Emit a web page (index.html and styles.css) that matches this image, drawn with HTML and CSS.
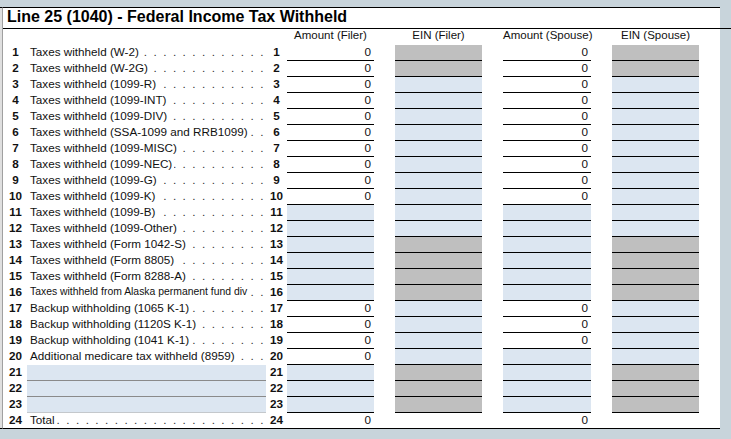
FILE: index.html
```html
<!DOCTYPE html>
<html>
<head>
<meta charset="utf-8">
<title>Line 25 (1040) - Federal Income Tax Withheld</title>
<link rel="stylesheet" href="styles.css">
</head>
<body>
<div class="window">
  <div class="edge"></div>
  <div class="panel">
    <div class="title">Line 25 (1040) - Federal Income Tax Withheld</div>
    <div class="row hdr">
      <span class="num"></span><span class="lbl"></span><span class="num2"></span>
      <span class="cell c1">Amount (Filer)</span>
      <span class="cell c2">EIN (Filer)</span>
      <span class="cell c3">Amount (Spouse)</span>
      <span class="cell c4">EIN (Spouse)</span>
    </div>

    <div class="row"><span class="num">1</span><span class="lbl"><span class="t">Taxes withheld (W-2)</span><span class="dots"></span></span><span class="num2">1</span><span class="cell c1">0</span><span class="cell c2 g"></span><span class="cell c3">0</span><span class="cell c4 g"></span></div>
    <div class="row"><span class="num">2</span><span class="lbl"><span class="t">Taxes withheld (W-2G)</span><span class="dots"></span></span><span class="num2">2</span><span class="cell c1">0</span><span class="cell c2 g"></span><span class="cell c3">0</span><span class="cell c4 g"></span></div>
    <div class="row"><span class="num">3</span><span class="lbl"><span class="t">Taxes withheld (1099-R)</span><span class="dots"></span></span><span class="num2">3</span><span class="cell c1">0</span><span class="cell c2 b"></span><span class="cell c3">0</span><span class="cell c4 b"></span></div>
    <div class="row"><span class="num">4</span><span class="lbl"><span class="t">Taxes withheld (1099-INT)</span><span class="dots"></span></span><span class="num2">4</span><span class="cell c1">0</span><span class="cell c2 b"></span><span class="cell c3">0</span><span class="cell c4 b"></span></div>
    <div class="row"><span class="num">5</span><span class="lbl"><span class="t">Taxes withheld (1099-DIV)</span><span class="dots"></span></span><span class="num2">5</span><span class="cell c1">0</span><span class="cell c2 b"></span><span class="cell c3">0</span><span class="cell c4 b"></span></div>
    <div class="row"><span class="num">6</span><span class="lbl"><span class="t">Taxes withheld (SSA-1099 and RRB1099)</span><span class="dots"></span></span><span class="num2">6</span><span class="cell c1">0</span><span class="cell c2 b"></span><span class="cell c3">0</span><span class="cell c4 b"></span></div>
    <div class="row"><span class="num">7</span><span class="lbl"><span class="t">Taxes withheld (1099-MISC)</span><span class="dots"></span></span><span class="num2">7</span><span class="cell c1">0</span><span class="cell c2 b"></span><span class="cell c3">0</span><span class="cell c4 b"></span></div>
    <div class="row"><span class="num">8</span><span class="lbl"><span class="t">Taxes withheld (1099-NEC)</span><span class="dots"></span></span><span class="num2">8</span><span class="cell c1">0</span><span class="cell c2 b"></span><span class="cell c3">0</span><span class="cell c4 b"></span></div>
    <div class="row"><span class="num">9</span><span class="lbl"><span class="t">Taxes withheld (1099-G)</span><span class="dots"></span></span><span class="num2">9</span><span class="cell c1">0</span><span class="cell c2 b"></span><span class="cell c3">0</span><span class="cell c4 b"></span></div>
    <div class="row"><span class="num">10</span><span class="lbl"><span class="t">Taxes withheld (1099-K)</span><span class="dots"></span></span><span class="num2">10</span><span class="cell c1">0</span><span class="cell c2 b"></span><span class="cell c3">0</span><span class="cell c4 b"></span></div>
    <div class="row"><span class="num">11</span><span class="lbl"><span class="t">Taxes withheld (1099-B)</span><span class="dots"></span></span><span class="num2">11</span><span class="cell c1 b"></span><span class="cell c2 b"></span><span class="cell c3 b"></span><span class="cell c4 b"></span></div>
    <div class="row"><span class="num">12</span><span class="lbl"><span class="t">Taxes withheld (1099-Other)</span><span class="dots"></span></span><span class="num2">12</span><span class="cell c1 b"></span><span class="cell c2 b"></span><span class="cell c3 b"></span><span class="cell c4 b"></span></div>
    <div class="row"><span class="num">13</span><span class="lbl"><span class="t">Taxes withheld (Form 1042-S)</span><span class="dots"></span></span><span class="num2">13</span><span class="cell c1 b"></span><span class="cell c2 g"></span><span class="cell c3 b"></span><span class="cell c4 g"></span></div>
    <div class="row"><span class="num">14</span><span class="lbl"><span class="t">Taxes withheld (Form 8805)</span><span class="dots"></span></span><span class="num2">14</span><span class="cell c1 b"></span><span class="cell c2 g"></span><span class="cell c3 b"></span><span class="cell c4 g"></span></div>
    <div class="row"><span class="num">15</span><span class="lbl"><span class="t">Taxes withheld (Form 8288-A)</span><span class="dots"></span></span><span class="num2">15</span><span class="cell c1 b"></span><span class="cell c2 g"></span><span class="cell c3 b"></span><span class="cell c4 g"></span></div>
    <div class="row"><span class="num">16</span><span class="lbl"><span class="t small">Taxes withheld from Alaska permanent fund div</span><span class="dots"></span></span><span class="num2">16</span><span class="cell c1 b"></span><span class="cell c2 g"></span><span class="cell c3 b"></span><span class="cell c4 g"></span></div>
    <div class="row"><span class="num">17</span><span class="lbl"><span class="t">Backup withholding (1065 K-1)</span><span class="dots"></span></span><span class="num2">17</span><span class="cell c1">0</span><span class="cell c2 b"></span><span class="cell c3">0</span><span class="cell c4 b"></span></div>
    <div class="row"><span class="num">18</span><span class="lbl"><span class="t">Backup withholding (1120S K-1)</span><span class="dots"></span></span><span class="num2">18</span><span class="cell c1">0</span><span class="cell c2 b"></span><span class="cell c3">0</span><span class="cell c4 b"></span></div>
    <div class="row"><span class="num">19</span><span class="lbl"><span class="t">Backup withholding (1041 K-1)</span><span class="dots"></span></span><span class="num2">19</span><span class="cell c1">0</span><span class="cell c2 b"></span><span class="cell c3">0</span><span class="cell c4 b"></span></div>
    <div class="row"><span class="num">20</span><span class="lbl"><span class="t">Additional medicare tax withheld (8959)</span><span class="dots"></span></span><span class="num2">20</span><span class="cell c1">0</span><span class="cell c2 b"></span><span class="cell c3 b"></span><span class="cell c4 b"></span></div>
    <div class="row"><span class="num">21</span><span class="lbl input"></span><span class="num2">21</span><span class="cell c1 b"></span><span class="cell c2 g"></span><span class="cell c3 b"></span><span class="cell c4 g"></span></div>
    <div class="row"><span class="num">22</span><span class="lbl input"></span><span class="num2">22</span><span class="cell c1 b"></span><span class="cell c2 g"></span><span class="cell c3 b"></span><span class="cell c4 g"></span></div>
    <div class="row"><span class="num">23</span><span class="lbl input last"></span><span class="num2">23</span><span class="cell c1 b"></span><span class="cell c2 g"></span><span class="cell c3 b"></span><span class="cell c4 g"></span></div>
    <div class="row total"><span class="num">24</span><span class="lbl"><span class="t">Total</span><span class="dots"></span></span><span class="num2">24</span><span class="cell c1">0</span><span class="cell c2"></span><span class="cell c3">0</span><span class="cell c4"></span></div>
  </div>
</div>
</body>
</html>
```

FILE: styles.css
```css
* { box-sizing: border-box; }

html, body {
  margin: 0;
  padding: 0;
}

body {
  width: 731px;
  height: 439px;
  overflow: hidden;
  background: #c8d4db;
  font-family: "Liberation Sans", Arial, sans-serif;
  color: #111;
}

.window {
  display: flex;
  padding-top: 7px;
  height: 429px;
  width: 720px;
}

.edge {
  width: 3px;
  background: #dfdfdf;
  border-top: 1px solid #000;
  border-bottom: 1px solid #000;
  border-right: 1px solid #a0a0a0;
}

.panel {
  width: 717px;
  background: #fff;
  border-top: 1px solid #000;
  border-bottom: 1px solid #000;
  display: flex;
  flex-direction: column;
}

.title {
  font-weight: bold;
  font-size: 16px;
  line-height: 18px;
  padding: 0 0 2px 4px;
  border-bottom: 1px solid #000;
  margin-right: -11px;
  color: #000;
}

.row {
  display: flex;
  height: 16px;
  font-size: 11.7px;
  line-height: 13px;
  white-space: nowrap;
}

.row.hdr {
  line-height: 12px;
  font-size: 11.5px;
}

.row.hdr .cell {
  border-bottom: none;
  text-align: center;
  padding-right: 0;
}

.row.total {
  height: 15px;
}

.num {
  width: 25px;
  text-align: center;
  font-weight: bold;
}

.lbl {
  width: 238px;
  display: flex;
  padding-left: 2px;
  padding-right: 1px;
  overflow: hidden;
}

.t {
  flex: none;
}

.t.small {
  font-size: 10.4px;
}

.dots {
  flex: 1;
  overflow: hidden;
  direction: rtl;
  white-space: nowrap;
  letter-spacing: 1.6px;
  margin-left: 2px;
  color: #333;
}

.dots::before {
  content: ". . . . . . . . . . . . . . . . . . . . . . . . . . . . . . . . . . . . . .";
}

.lbl.input {
  background: #dce6f1;
  border-bottom: 1px solid #8a8a8a;
  margin-left: -1px;
  width: 239px;
}

.lbl.input.last {
  border-bottom-color: #c4c8cc;
}

.num2 {
  width: 21px;
  text-align: center;
  font-weight: bold;
}

.cell {
  border-bottom: 1px solid #000;
  text-align: right;
  padding-right: 3px;
}

.row.total .cell {
  border-bottom: none;
}

.c1 { width: 87px; }
.c2 { width: 87px; margin-left: 21px; }
.c3 { width: 88px; margin-left: 21px; }
.c4 { width: 87px; margin-left: 21px; }

.b { background: #dce6f1; }
.g { background: #bfbfbf; }
```
